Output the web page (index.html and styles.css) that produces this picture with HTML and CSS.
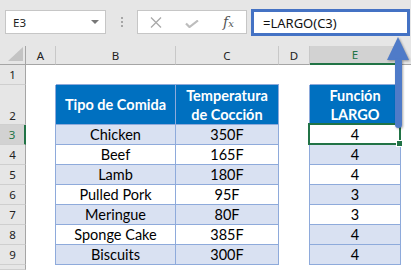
FILE: index.html
```html
<!DOCTYPE html>
<html lang="es">
<head>
    <meta charset="UTF-8">
    <title>Función LARGO</title>
    <link rel="stylesheet" href="styles.css">
</head>
<body>
<div class="app">
    <div class="toolbar">
        <div class="namebox"><span>E3</span><span class="caret"></span></div>
        <div class="grip"><i></i><i></i><i></i></div>
        <div class="fbuttons">
            <svg class="ico-x" width="12" height="11" viewBox="0 0 12 11"><path d="M1 0.5 L11 10.5 M11 0.5 L1 10.5" stroke="#a9a9a9" stroke-width="1.3" fill="none"/></svg>
            <svg class="ico-ok" width="14" height="8" viewBox="0 0 14 8"><path d="M1 3.5 L4.5 7 L13 0.5" stroke="#bdbdbd" stroke-width="2.2" fill="none"/></svg>
            <span class="fx">f<span>x</span></span>
        </div>
        <div class="formula">=LARGO(C3)</div>
    </div>

    <div class="sheet">
        <!-- cabecera de columnas -->
        <div class="ch corner">
            <svg width="15" height="14" viewBox="0 0 15 14"><polygon points="15,0 15,14 0,14" fill="#c3c3c3"/></svg>
        </div>
        <div class="ch">A</div>
        <div class="ch">B</div>
        <div class="ch">C</div>
        <div class="ch">D</div>
        <div class="ch on">E</div>
        <div class="ch last"></div>

        <!-- fila 1 -->
        <div class="rh">1</div>
        <div class="c"></div>
        <div class="c tt"></div>
        <div class="c tt"></div>
        <div class="c"></div>
        <div class="c tt"></div>
        <div class="c"></div>

        <!-- fila 2 -->
        <div class="rh low">2</div>
        <div class="c tl"></div>
        <div class="c t th">Tipo de Comida</div>
        <div class="c t th">Temperatura<br>de Cocción</div>
        <div class="c tl"></div>
        <div class="c t th">Función<br>LARGO</div>
        <div class="c"></div>

        <!-- fila 3 -->
        <div class="rh on">3</div>
        <div class="c tl"></div>
        <div class="c t alt">Chicken</div>
        <div class="c t alt">350F</div>
        <div class="c tl"></div>
        <div class="c t sel">4</div>
        <div class="c"></div>

        <!-- fila 4 -->
        <div class="rh">4</div>
        <div class="c tl"></div>
        <div class="c t">Beef</div>
        <div class="c t">165F</div>
        <div class="c tl"></div>
        <div class="c t alt">4</div>
        <div class="c"></div>

        <!-- fila 5 -->
        <div class="rh">5</div>
        <div class="c tl"></div>
        <div class="c t alt">Lamb</div>
        <div class="c t alt">180F</div>
        <div class="c tl"></div>
        <div class="c t">4</div>
        <div class="c"></div>

        <!-- fila 6 -->
        <div class="rh">6</div>
        <div class="c tl"></div>
        <div class="c t">Pulled Pork</div>
        <div class="c t">95F</div>
        <div class="c tl"></div>
        <div class="c t alt">3</div>
        <div class="c"></div>

        <!-- fila 7 -->
        <div class="rh">7</div>
        <div class="c tl"></div>
        <div class="c t alt">Meringue</div>
        <div class="c t alt">80F</div>
        <div class="c tl"></div>
        <div class="c t">3</div>
        <div class="c"></div>

        <!-- fila 8 -->
        <div class="rh">8</div>
        <div class="c tl"></div>
        <div class="c t">Sponge Cake</div>
        <div class="c t">385F</div>
        <div class="c tl"></div>
        <div class="c t alt">4</div>
        <div class="c"></div>

        <!-- fila 9 -->
        <div class="rh">9</div>
        <div class="c tl"></div>
        <div class="c t alt">Biscuits</div>
        <div class="c t alt">300F</div>
        <div class="c tl"></div>
        <div class="c t alt">4</div>
        <div class="c"></div>

        <!-- fila 10, solo asoma el borde -->
        <div class="rh"></div>
        <div class="c"></div>
        <div class="c"></div>
        <div class="c"></div>
        <div class="c"></div>
        <div class="c"></div>
        <div class="c"></div>
    </div>

    <svg class="arrow" width="411" height="270" viewBox="0 0 411 270">
        <polygon points="387,60 409,60 398,37" fill="#4f7bc8"/>
        <rect x="395" y="58" width="7" height="70" rx="3.5" fill="#4f7bc8"/>
    </svg>
</div>
</body>
</html>
```

FILE: styles.css
```css
html, body {
    margin: 0;
    padding: 0;
}

body {
    width: 411px;
    height: 270px;
    overflow: hidden;
    background: #fff;
    font-family: "Noto Sans", sans-serif;
}

.app {
    position: relative;
}

.toolbar {
    height: 46px;
    box-sizing: border-box;
    padding: 10px 0 0 5px;
    background: #e6e6e6;
    display: flex;
    align-items: flex-start;
}

.namebox {
    width: 101px;
    height: 24px;
    box-sizing: border-box;
    border: 1px solid #c6c6c6;
    background: #fff;
    padding: 0 6px 0 7px;
    display: flex;
    align-items: center;
    justify-content: space-between;
    font-size: 11.5px;
    color: #222;
}

.caret {
    border-left: 4px solid transparent;
    border-right: 4px solid transparent;
    border-top: 4px solid #777;
}

.grip {
    width: 31px;
    padding-top: 7px;
    display: flex;
    flex-direction: column;
    align-items: center;
    gap: 2px;
}

.grip i {
    width: 2px;
    height: 2px;
    background: #a6a6a6;
}

.fbuttons {
    width: 110px;
    height: 24px;
    box-sizing: border-box;
    border: 1px solid #c6c6c6;
    background: #fff;
    padding-left: 12px;
    display: flex;
    align-items: center;
}

.ico-x {
    margin-top: 1px;
}

.ico-ok {
    margin-left: 23px;
    margin-top: 4px;
}

.fx {
    margin-left: 24px;
    font-family: "DejaVu Serif", "Liberation Serif", serif;
    font-style: italic;
    font-size: 14px;
    color: #555;
}

.fx span {
    font-size: 10px;
}

.formula {
    width: 159px;
    height: 27px;
    box-sizing: border-box;
    margin: -1px 0 0 4px;
    border: 3px solid #4472c4;
    background: #fff;
    padding: 1px 0 0 9px;
    font-size: 13px;
    line-height: 20px;
    color: #111;
}

.sheet {
    display: grid;
    grid-template-columns: 26px 30px 120px 103px 31px 91px 10px;
    grid-template-rows: 19px 20px 40px repeat(7, 20px) 5px;
    font-family: Lato, sans-serif;
    font-size: 14.5px;
    color: #000;
}

.sheet > div {
    box-sizing: border-box;
}

.ch {
    background: #e6e6e6;
    border-right: 1px solid #c8c8c8;
    border-bottom: 1px solid #a5a5a5;
    font-family: "Noto Sans", sans-serif;
    font-size: 11.5px;
    color: #222;
    display: flex;
    align-items: center;
    justify-content: center;
}

.ch.corner {
    border-right-color: #a5a5a5;
    justify-content: flex-end;
    align-items: flex-end;
    padding: 0 2px 3px 0;
}

.ch.on {
    background: #d2d2d2;
    border-bottom: 2px solid #217346;
    color: #217346;
}

.ch.last {
    border-right: 0;
}

.rh {
    background: #e6e6e6;
    border-right: 1px solid #a5a5a5;
    border-bottom: 1px solid #cfcfcf;
    font-family: "Noto Sans", sans-serif;
    font-size: 11.5px;
    color: #222;
    display: flex;
    align-items: center;
    justify-content: center;
}

.rh.low {
    align-items: flex-end;
    padding-bottom: 1px;
}

.rh.on {
    background: #d2d2d2;
    border-right: 2px solid #217346;
    color: #217346;
}

.c {
    display: flex;
    align-items: center;
    justify-content: center;
    text-align: center;
    line-height: 19px;
}

.tt {
    border-bottom: 1px solid #8eaadb;
}

.tl {
    border-right: 1px solid #8eaadb;
}

.t {
    border-right: 1px solid #8eaadb;
    border-bottom: 1px solid #8eaadb;
}

.th {
    background: #0070c0;
    color: #fff;
    font-weight: bold;
}

.alt {
    background: #d9e1f2;
}

.sel {
    position: relative;
    background: #fff;
}

.sel::before {
    content: "";
    position: absolute;
    left: -2px;
    top: -2px;
    right: -1px;
    bottom: -1px;
    border: 2px solid #217346;
}

.sel::after {
    content: "";
    position: absolute;
    right: -3px;
    bottom: -3px;
    width: 5px;
    height: 5px;
    background: #217346;
    border: 1px solid #fff;
}

.arrow {
    position: absolute;
    left: 0;
    top: 0;
    pointer-events: none;
    filter: drop-shadow(1px 1px 1px rgba(0, 0, 0, 0.35));
}
```
